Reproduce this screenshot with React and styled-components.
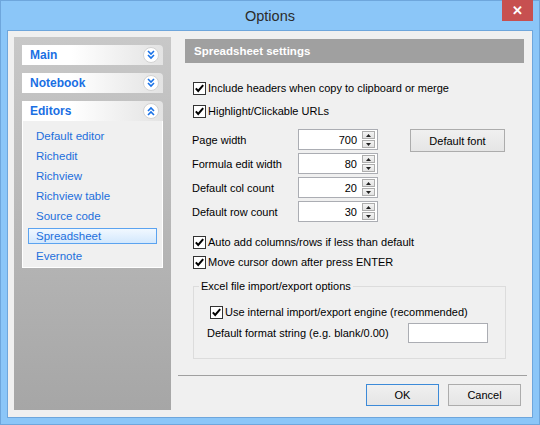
import React from 'react';
import styled, { createGlobalStyle } from 'styled-components';

const Global = createGlobalStyle`
body {
  margin: 0;
  font-family: "Liberation Sans", Arial, sans-serif;
}
`;

const Window = styled.div`
width: 540px;
height: 425px;
box-sizing: border-box;
background: #8bc6f8;
border: 1px solid #6ea6dc;
display: flex;
flex-direction: column;
position: relative;
`;

const TitleBar = styled.div`
height: 29px;
display: flex;
align-items: center;
justify-content: center;
`;

const Title = styled.div`
font-size: 14.5px;
color: #2b2b2b;
margin-top: 1px;
`;

const CloseButton = styled.div`
position: absolute;
top: -1px;
right: 6px;
width: 31px;
height: 21px;
background: #c75050;
color: white;
font-size: 13px;
font-weight: bold;
display: flex;
align-items: center;
justify-content: center;
`;

const Client = styled.div`
flex: 1;
margin: 0 6px 6px 6px;
background: #f0f0f0;
border: 1px solid #6ea6dc;
padding: 6px 5px 7px 6px;
display: flex;
`;

const Sidebar = styled.div`
width: 157px;
box-sizing: border-box;
padding: 8px;
background: linear-gradient(to bottom, #c8c8c8, #a6a6a6);
display: flex;
flex-direction: column;
gap: 8px;
`;

const SectionHeader = styled.div`
height: 20px;
box-sizing: border-box;
padding: 0 4px 0 8px;
display: flex;
align-items: center;
justify-content: space-between;
background: linear-gradient(to right, #ffffff 35%, #e3e3e3);
border-radius: 0 4px 0 0;
font-size: 12px;
font-weight: bold;
color: #1a6fe3;
`;

const SectionBody = styled.div`
background: #f0f0f0;
border: 1px solid #ffffff;
border-top: none;
padding: 7px 5px 3px;
display: flex;
flex-direction: column;
gap: 4px;
`;

const Item = styled.div`
height: 16px;
box-sizing: border-box;
padding-left: 7px;
display: flex;
align-items: center;
font-size: 11.5px;
color: #1d6fdc;
border: 1px solid ${p => (p.$selected ? '#5ba3f0' : 'transparent')};
background: ${p => (p.$selected ? 'linear-gradient(to bottom, #f1f8ff, #d3e8fd)' : 'transparent')};
`;

const ChevronCircle = styled.svg`
width: 16px;
height: 16px;
`;

const Content = styled.div`
flex: 1;
margin-left: 7px;
display: flex;
flex-direction: column;
`;

const PanelHeader = styled.div`
margin: 2px 3px 0 7px;
height: 24px;
background: #a0a0a0;
color: white;
font-size: 11.5px;
font-weight: bold;
display: flex;
align-items: center;
padding-left: 9px;
`;

const Settings = styled.div`
padding: 15px 0 0 14px;
display: flex;
flex-direction: column;
`;

const CheckRow = styled.label`
height: 20px;
display: flex;
align-items: center;
gap: 2px;
margin-top: ${p => p.$mt || 0}px;
margin-left: ${p => p.$ml || 1}px;
font-size: 11px;
color: #000;
`;

const Box = styled.svg`
width: 13px;
height: 13px;
flex-shrink: 0;
`;

const SpinSection = styled.div`
margin-top: 8px;
display: flex;
align-items: flex-start;
`;

const SpinColumn = styled.div`
display: flex;
flex-direction: column;
gap: 3px;
`;

const SpinRow = styled.div`
display: grid;
grid-template-columns: 106px 80px;
height: 21px;
align-items: center;
font-size: 11px;
color: #000;
`;

const SpinField = styled.div`
height: 21px;
box-sizing: border-box;
border: 1px solid #abadb3;
background: white;
display: flex;
align-items: center;
justify-content: flex-end;
padding-right: 2px;
gap: 5px;
font-size: 11px;
`;

const SpinButtons = styled.div`
display: flex;
flex-direction: column;
gap: 1px;
`;

const SpinHalf = styled.div`
width: 13px;
height: 8px;
box-sizing: border-box;
border: 1px solid #adadad;
background: linear-gradient(to bottom, #f4f4f4, #e2e2e2);
display: flex;
align-items: center;
justify-content: center;
`;

const Button = styled.div`
width: ${p => p.$w || 73}px;
height: ${p => p.$h || 22}px;
box-sizing: border-box;
border: 1px solid ${p => (p.$default ? '#3c8ad8' : '#acacac')};
background: linear-gradient(to bottom, #f0f0f0, #e5e5e5);
display: flex;
align-items: center;
justify-content: center;
font-size: 11px;
color: #000;
`;

const FontButton = styled(Button)`
margin-left: 32px;
`;

const Group = styled.fieldset`
margin: 6px 0 0 1px;
width: 313px;
box-sizing: border-box;
border: 1px solid #dcdcdc;
padding: 0 0 15px 14px;
`;

const Legend = styled.legend`
margin-left: -9px;
padding: 0 2px;
line-height: 16px;
font-size: 11px;
color: #000;
`;

const FormatRow = styled.div`
margin-top: 1px;
height: 20px;
display: flex;
align-items: center;
font-size: 11px;
color: #000;
`;

const FormatLabel = styled.div`
width: 201px;
margin-left: -1px;
`;

const TextField = styled.div`
width: 80px;
height: 20px;
box-sizing: border-box;
border: 1px solid #abadb3;
background: white;
`;

const Footer = styled.div`
margin-top: auto;
border-top: 1px solid #a0a0a0;
padding: 8px 6px 4px;
display: flex;
justify-content: flex-end;
gap: 9px;
`;

function Chevron({ up }) {
  const d = up
    ? ['M5 8 L8 5 L11 8', 'M5 12 L8 9 L11 12']
    : ['M5 4 L8 7 L11 4', 'M5 8 L8 11 L11 8'];
  return (
    <ChevronCircle viewBox="0 0 16 16">
      <circle cx="8" cy="8" r="7.5" fill="#fff" stroke="#d2d2d2" />
      {d.map(p => (
        <path key={p} d={p} fill="none" stroke="#1a73e8" strokeWidth="1.6" />
      ))}
    </ChevronCircle>
  );
}

function Check({ children, mt, ml }) {
  return (
    <CheckRow $mt={mt} $ml={ml}>
      <Box viewBox="0 0 13 13">
        <rect x="0.5" y="0.5" width="12" height="12" fill="#fff" stroke="#333" />
        <path d="M2.8 6.4 L5.2 9 L10.2 3.2" fill="none" stroke="#000" strokeWidth="2" />
      </Box>
      {children}
    </CheckRow>
  );
}

function Spin({ label, value }) {
  return (
    <SpinRow>
      <span>{label}</span>
      <SpinField>
        {value}
        <SpinButtons>
          <SpinHalf>
            <svg width="5" height="3" viewBox="0 0 5 3"><path d="M0 3 L2.5 0 L5 3 Z" fill="#222" /></svg>
          </SpinHalf>
          <SpinHalf>
            <svg width="5" height="3" viewBox="0 0 5 3"><path d="M0 0 L2.5 3 L5 0 Z" fill="#222" /></svg>
          </SpinHalf>
        </SpinButtons>
      </SpinField>
    </SpinRow>
  );
}

const editors = ['Default editor', 'Richedit', 'Richview', 'Richview table', 'Source code', 'Spreadsheet', 'Evernote'];

export default function App() {
  return (
    <>
      <Global />
      <Window>
        <TitleBar>
          <Title>Options</Title>
          <CloseButton>✕</CloseButton>
        </TitleBar>
        <Client>
          <Sidebar>
            <SectionHeader>Main<Chevron /></SectionHeader>
            <SectionHeader>Notebook<Chevron /></SectionHeader>
            <div>
              <SectionHeader>Editors<Chevron up /></SectionHeader>
              <SectionBody>
                {editors.map(e => (
                  <Item key={e} $selected={e === 'Spreadsheet'}>{e}</Item>
                ))}
              </SectionBody>
            </div>
          </Sidebar>
          <Content>
            <PanelHeader>Spreadsheet settings</PanelHeader>
            <Settings>
              <Check>Include headers when copy to clipboard or merge</Check>
              <Check mt={3}>Highlight/Clickable URLs</Check>
              <SpinSection>
                <SpinColumn>
                  <Spin label="Page width" value="700" />
                  <Spin label="Formula edit width" value="80" />
                  <Spin label="Default col count" value="20" />
                  <Spin label="Default row count" value="30" />
                </SpinColumn>
                <FontButton $w={95} $h={23}>Default font</FontButton>
              </SpinSection>
              <Check mt={10}>Auto add columns/rows if less than default</Check>
              <Check>Move cursor down after press ENTER</Check>
              <Group>
                <Legend>Excel file import/export options</Legend>
                <Check mt={8} ml={2}>Use internal import/export engine (recommended)</Check>
                <FormatRow>
                  <FormatLabel>Default format string (e.g. blank/0.00)</FormatLabel>
                  <TextField />
                </FormatRow>
              </Group>
            </Settings>
            <Footer>
              <Button $default>OK</Button>
              <Button>Cancel</Button>
            </Footer>
          </Content>
        </Client>
      </Window>
    </>
  );
}
